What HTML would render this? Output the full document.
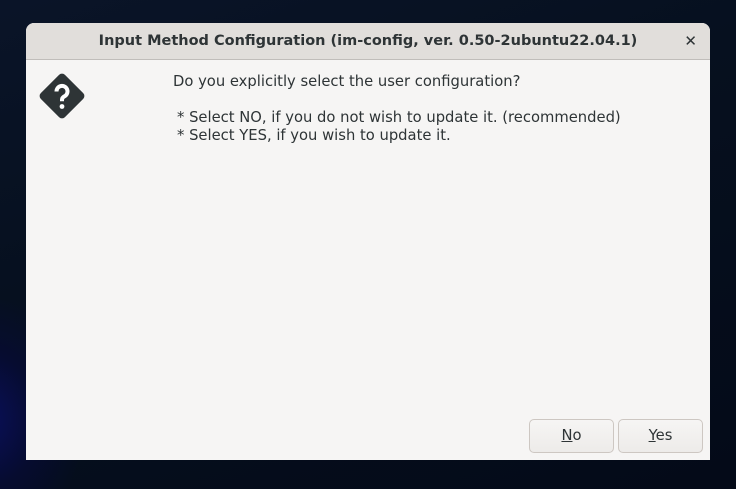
<!DOCTYPE html>
<html><head><style>
html,body{margin:0;width:736px;height:489px;overflow:hidden}
body{background:linear-gradient(160deg,#0a1428 0%,#06101f 40%,#040a18 100%);font-family:"DejaVu Sans","Liberation Sans",sans-serif;position:relative}
.glow{position:absolute;left:-40px;top:300px;width:120px;height:200px;background:radial-gradient(ellipse at 20% 60%,#0a0f5a 0%,rgba(6,10,60,0.6) 40%,transparent 75%)}
.dlg{position:absolute;left:26px;top:23px;width:684px;height:437px;background:#f6f5f4;border-radius:8px 8px 0 0;overflow:hidden}
.hdr{height:36px;background:#e1dedb;border-bottom:1px solid #c0bdba;text-align:center;line-height:36px;font-weight:bold;font-size:14.5px;color:#2e3436}
.x{position:absolute;right:13px;top:0;line-height:36px;font-size:15px;font-weight:bold;color:#2e3436}
.t{position:absolute;font-size:14.75px;color:#2e3436;white-space:pre}
.btn{position:absolute;top:396px;width:85px;height:34px;border:1px solid #cdc7c2;border-radius:5px;background:linear-gradient(#f6f5f4,#edebe9);text-align:center;line-height:32px;font-size:14.75px;color:#2e3436;box-sizing:border-box}
</style></head><body>
<div class="glow"></div>
<div class="dlg">
<div class="hdr">Input Method Configuration (im-config, ver. 0.50-2ubuntu22.04.1)</div>
<div class="x">✕</div>
<svg style="position:absolute;left:11px;top:48px" width="50" height="50" viewBox="0 0 50 50">
<rect x="8" y="8" width="34" height="34" rx="4" transform="rotate(45 25 25)" fill="#2e3436"/>
<path d="M19.5 20.5a5.5 5.5 0 1 1 8 4.8c-1.6.9-2.5 1.7-2.5 3.5v1.5" stroke="#fff" stroke-width="4" fill="none"/>
<circle cx="25" cy="35.5" r="2.4" fill="#fff"/>
</svg>
<div class="t" style="left:147px;top:50px">Do you explicitly select the user configuration?</div>
<div class="t" style="left:151px;top:86px">* Select NO, if you do not wish to update it. (recommended)</div>
<div class="t" style="left:151px;top:104px">* Select YES, if you wish to update it.</div>
<div class="btn" style="left:503px"><u>N</u>o</div>
<div class="btn" style="left:592px"><u>Y</u>es</div>
</div>
</body></html>
